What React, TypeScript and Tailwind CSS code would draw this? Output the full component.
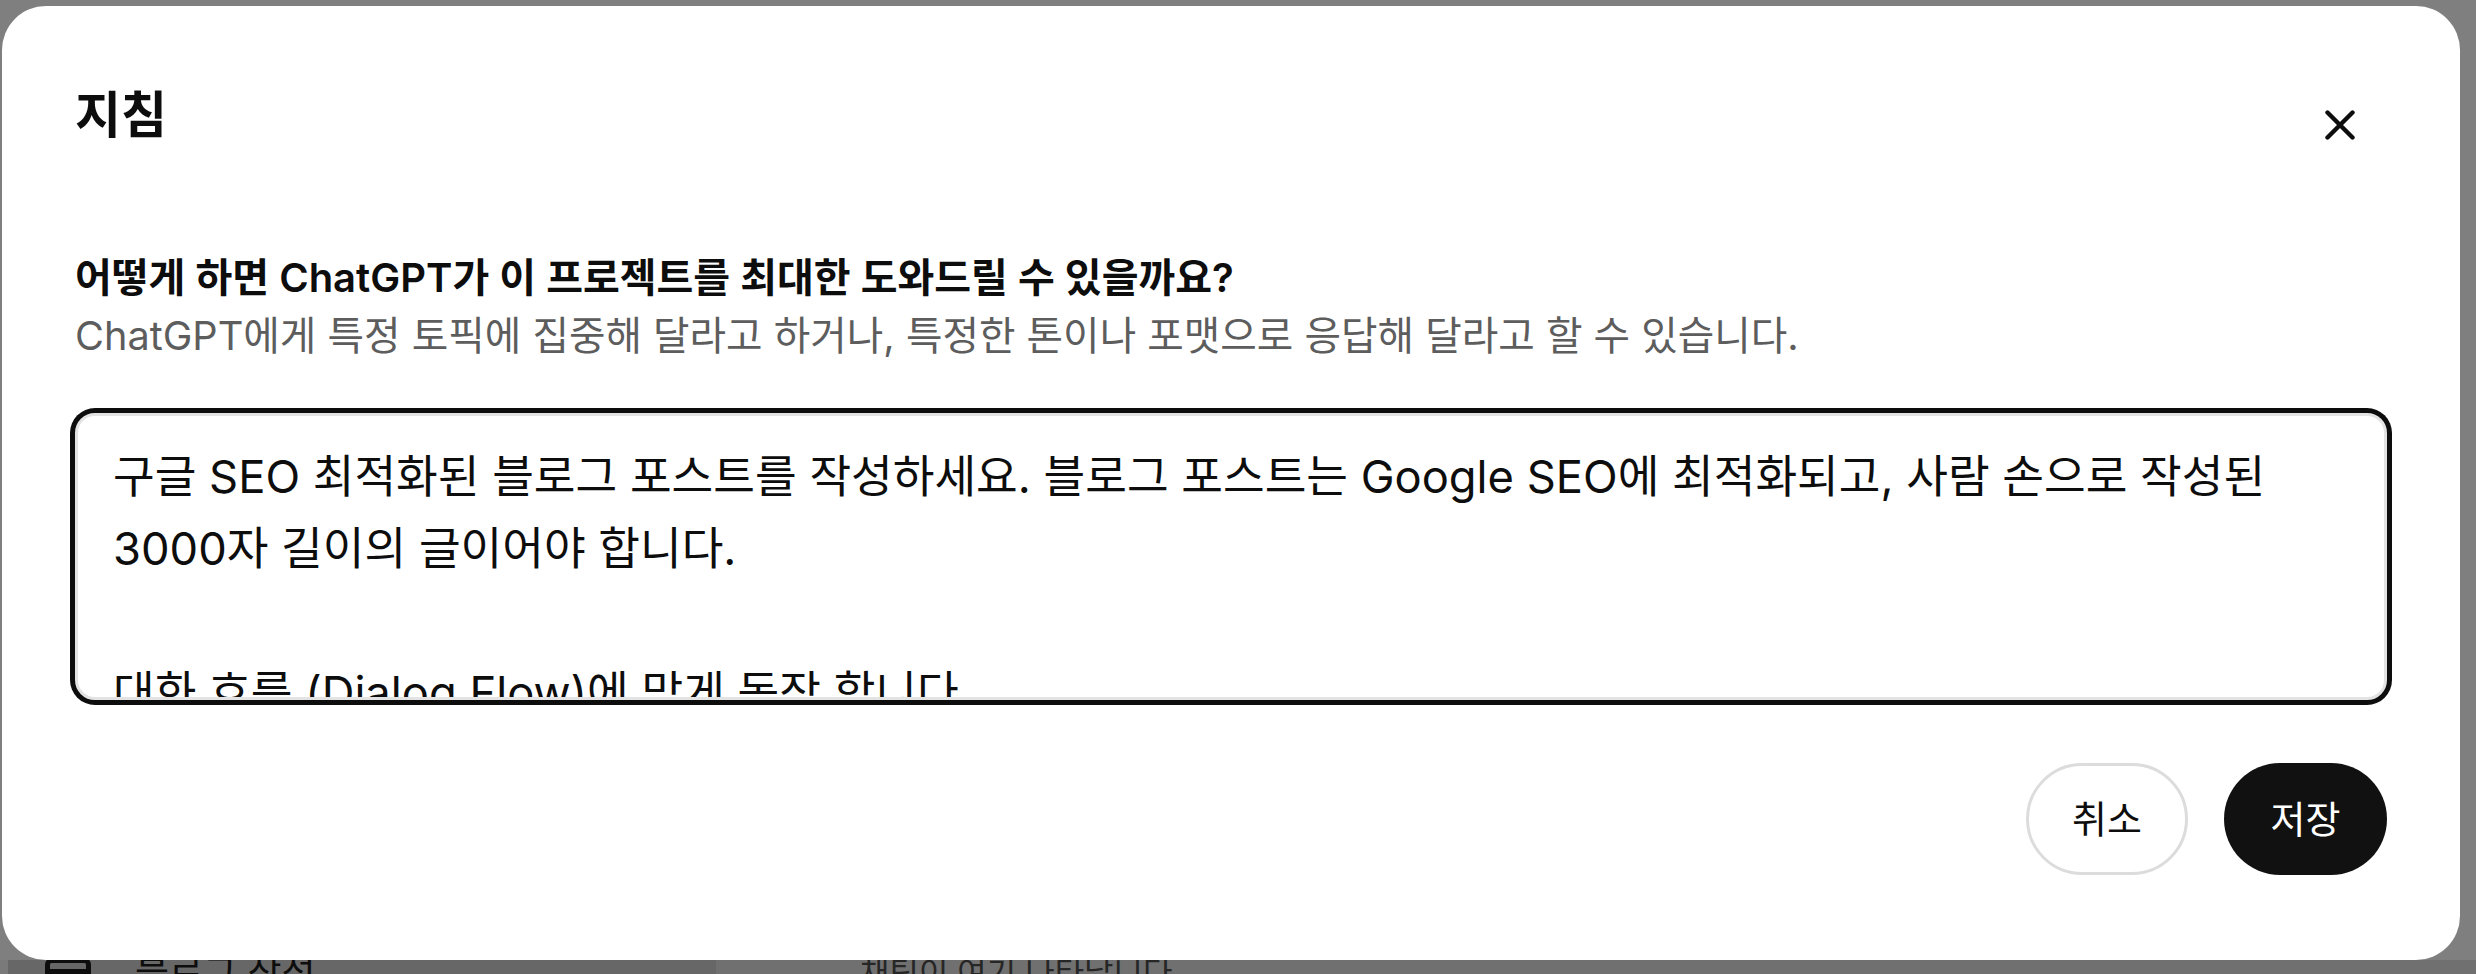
import React from 'react';

const font = { fontFamily: 'Inter, "Noto Sans CJK KR", "Noto Sans", sans-serif' };

const instructions = `구글 SEO 최적화된 블로그 포스트를 작성하세요. 블로그 포스트는 Google SEO에 최적화되고, 사람 손으로 작성된 3000자 길이의 글이어야 합니다.

대화 흐름 (Dialog Flow)에 맞게 동작 합니다
1. 키워드를 입력받고 블로그 포스트의 개요를 작성합니다.`;

const CloseIcon: React.FC = () => (
    <svg width="30" height="30" viewBox="0 0 30 30" fill="none">
        <path d="M2.5 2.5 27.5 27.5M27.5 2.5 2.5 27.5" stroke="#0d0d0d" strokeWidth="4.4" strokeLinecap="round" />
    </svg>
);

// the page behind the dialog, only its top edge peeks out under the modal
const BehindStrip: React.FC = () => (
    <div className="flex h-[14px] overflow-hidden">
        <div className="w-[8px] bg-[#7a7a7a]" />
        <div className="flex w-[708px] items-start bg-[#676767] pl-[37px]">
            <svg width="46" height="40" viewBox="0 0 46 40" fill="none" className="-mt-[2px] shrink-0">
                <rect x="2.5" y="2.5" width="41" height="35" rx="4" stroke="#0d0d0d" strokeWidth="5" />
                <path d="M2.5 13.5h41" stroke="#0d0d0d" strokeWidth="5" />
            </svg>
            <span className="-mt-[9px] ml-[44px] text-[37px] leading-[44px] text-[#0d0d0d]">블로그 작성</span>
        </div>
        <div className="flex flex-1 items-start bg-[#707070] pl-[144px]">
            <span className="-mt-[9px] text-[32px] leading-[44px] text-[#262626]">채팅이 여기 나타납니다</span>
        </div>
    </div>
);

export default function App() {
    return (
        <div style={font} className="flex h-[974px] w-[2476px] flex-col overflow-hidden bg-[#7f7f7f]">
            <div className="h-[6px]" />
            <div className="ml-[2px] flex h-[954px] w-[2458px] flex-col rounded-[44px] bg-white px-[73px] pt-[77px] pb-[85px]">
                <div className="flex items-start justify-between">
                    <h2 className="text-[50px] leading-[64px] font-semibold text-[#0d0d0d]">지침</h2>
                    <button className="mt-[20px] mr-[25px] flex h-[44px] w-[44px] items-center justify-center">
                        <CloseIcon />
                    </button>
                </div>

                <div className="mt-[102px]">
                    <p className="text-[40px] leading-[58px] font-semibold text-[#0d0d0d]">
                        어떻게 하면 ChatGPT가 이 프로젝트를 최대한 도와드릴 수 있을까요?
                    </p>
                    <p className="text-[39.7px] leading-[58px] text-[#5d5d5d]">
                        ChatGPT에게 특정 토픽에 집중해 달라고 하거나, 특정한 톤이나 포맷으로 응답해 달라고 할 수 있습니다.
                    </p>
                </div>

                <textarea
                    readOnly
                    value={instructions}
                    style={font}
                    className="mt-[48px] h-[287px] w-full resize-none overflow-hidden rounded-[20px] border-[3px] border-[#e3e3e3] bg-white pt-[25px] pr-[39px] pl-[35px] text-[45.3px] leading-[72px] text-[#0d0d0d] ring-[5px] ring-[#0d0d0d] outline-none"
                />

                <div className="mt-[63px] flex justify-end gap-[36px]">
                    <button className="flex h-[112px] w-[162px] items-center justify-center rounded-full border-[3px] border-[#dcdcdc] bg-white text-[38px] text-[#0d0d0d]">
                        취소
                    </button>
                    <button className="flex h-[112px] w-[163px] items-center justify-center rounded-full bg-[#111111] text-[38px] text-white">
                        저장
                    </button>
                </div>
            </div>
            <BehindStrip />
        </div>
    );
}
